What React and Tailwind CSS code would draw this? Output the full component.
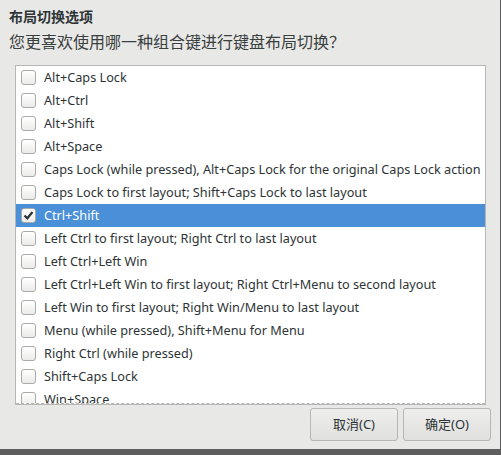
const options = [
  "Alt+Caps Lock",
  "Alt+Ctrl",
  "Alt+Shift",
  "Alt+Space",
  "Caps Lock (while pressed), Alt+Caps Lock for the original Caps Lock action",
  "Caps Lock to first layout; Shift+Caps Lock to last layout",
  "Ctrl+Shift",
  "Left Ctrl to first layout; Right Ctrl to last layout",
  "Left Ctrl+Left Win",
  "Left Ctrl+Left Win to first layout; Right Ctrl+Menu to second layout",
  "Left Win to first layout; Right Win/Menu to last layout",
  "Menu (while pressed), Shift+Menu for Menu",
  "Right Ctrl (while pressed)",
  "Shift+Caps Lock",
  "Win+Space",
];

const Checkbox = ({ checked }) => (
  <div className="w-[15px] h-[15px] shrink-0 rounded-[3px] border border-[#a9aba7] bg-gradient-to-b from-white to-[#ebebea] flex items-center justify-center">
    {checked && (
      <svg width="11" height="11" viewBox="0 0 11 11">
        <path d="M1.5 5.5 L4.3 8.3 L9.5 2" fill="none" stroke="#2e3436" strokeWidth="2.2" />
      </svg>
    )}
  </div>
);

export default function App() {
  return (
    <div
      className="w-[501px] h-[455px] bg-[#5e5e5e] overflow-hidden text-[#2e3436]"
      style={{ fontFamily: '"Noto Sans", "Noto Sans CJK SC", sans-serif' }}
    >
      <div className="w-[500px] h-[449px] bg-[#e8e8e7] flex flex-col">
        <div className="pl-[9px] pt-[6px] text-[14px] font-bold leading-[22px]">布局切换选项</div>
        <div className="pl-[9px] pt-[2px] text-[16px] leading-[24px] text-[#3a3f40]">
          您更喜欢使用哪一种组合键进行键盘布局切换？
        </div>
        <div className="ml-[15px] mt-[11px] w-[471px] h-[340px] border border-[#b6b6b3] bg-white overflow-hidden relative">
          {options.map((o, i) => {
            const sel = i === 6;
            return (
              <div
                key={o}
                className={`h-[23px] flex items-center pl-[5px] gap-[8px] text-[12.7px] whitespace-nowrap ${
                  sel ? "bg-[#4a90d9] text-white" : ""
                }`}
              >
                <Checkbox checked={sel} />
                <span>{o}</span>
              </div>
            );
          })}
          <div className="absolute left-0 right-0 bottom-0 h-[1px] border-b border-dashed border-[#b6b6b3] bg-white" />
        </div>
        <div className="flex justify-end gap-[5px] pr-[9px] mt-[3px]">
          {["取消(C)", "确定(O)"].map((b) => (
            <button
              key={b}
              className="w-[88px] h-[33px] rounded-[3px] border border-[#b6b6b3] bg-gradient-to-b from-[#eeeeec] to-[#e0e0de] text-[13px] text-[#2e3436]"
            >
              {b}
            </button>
          ))}
        </div>
      </div>
    </div>
  );
}
